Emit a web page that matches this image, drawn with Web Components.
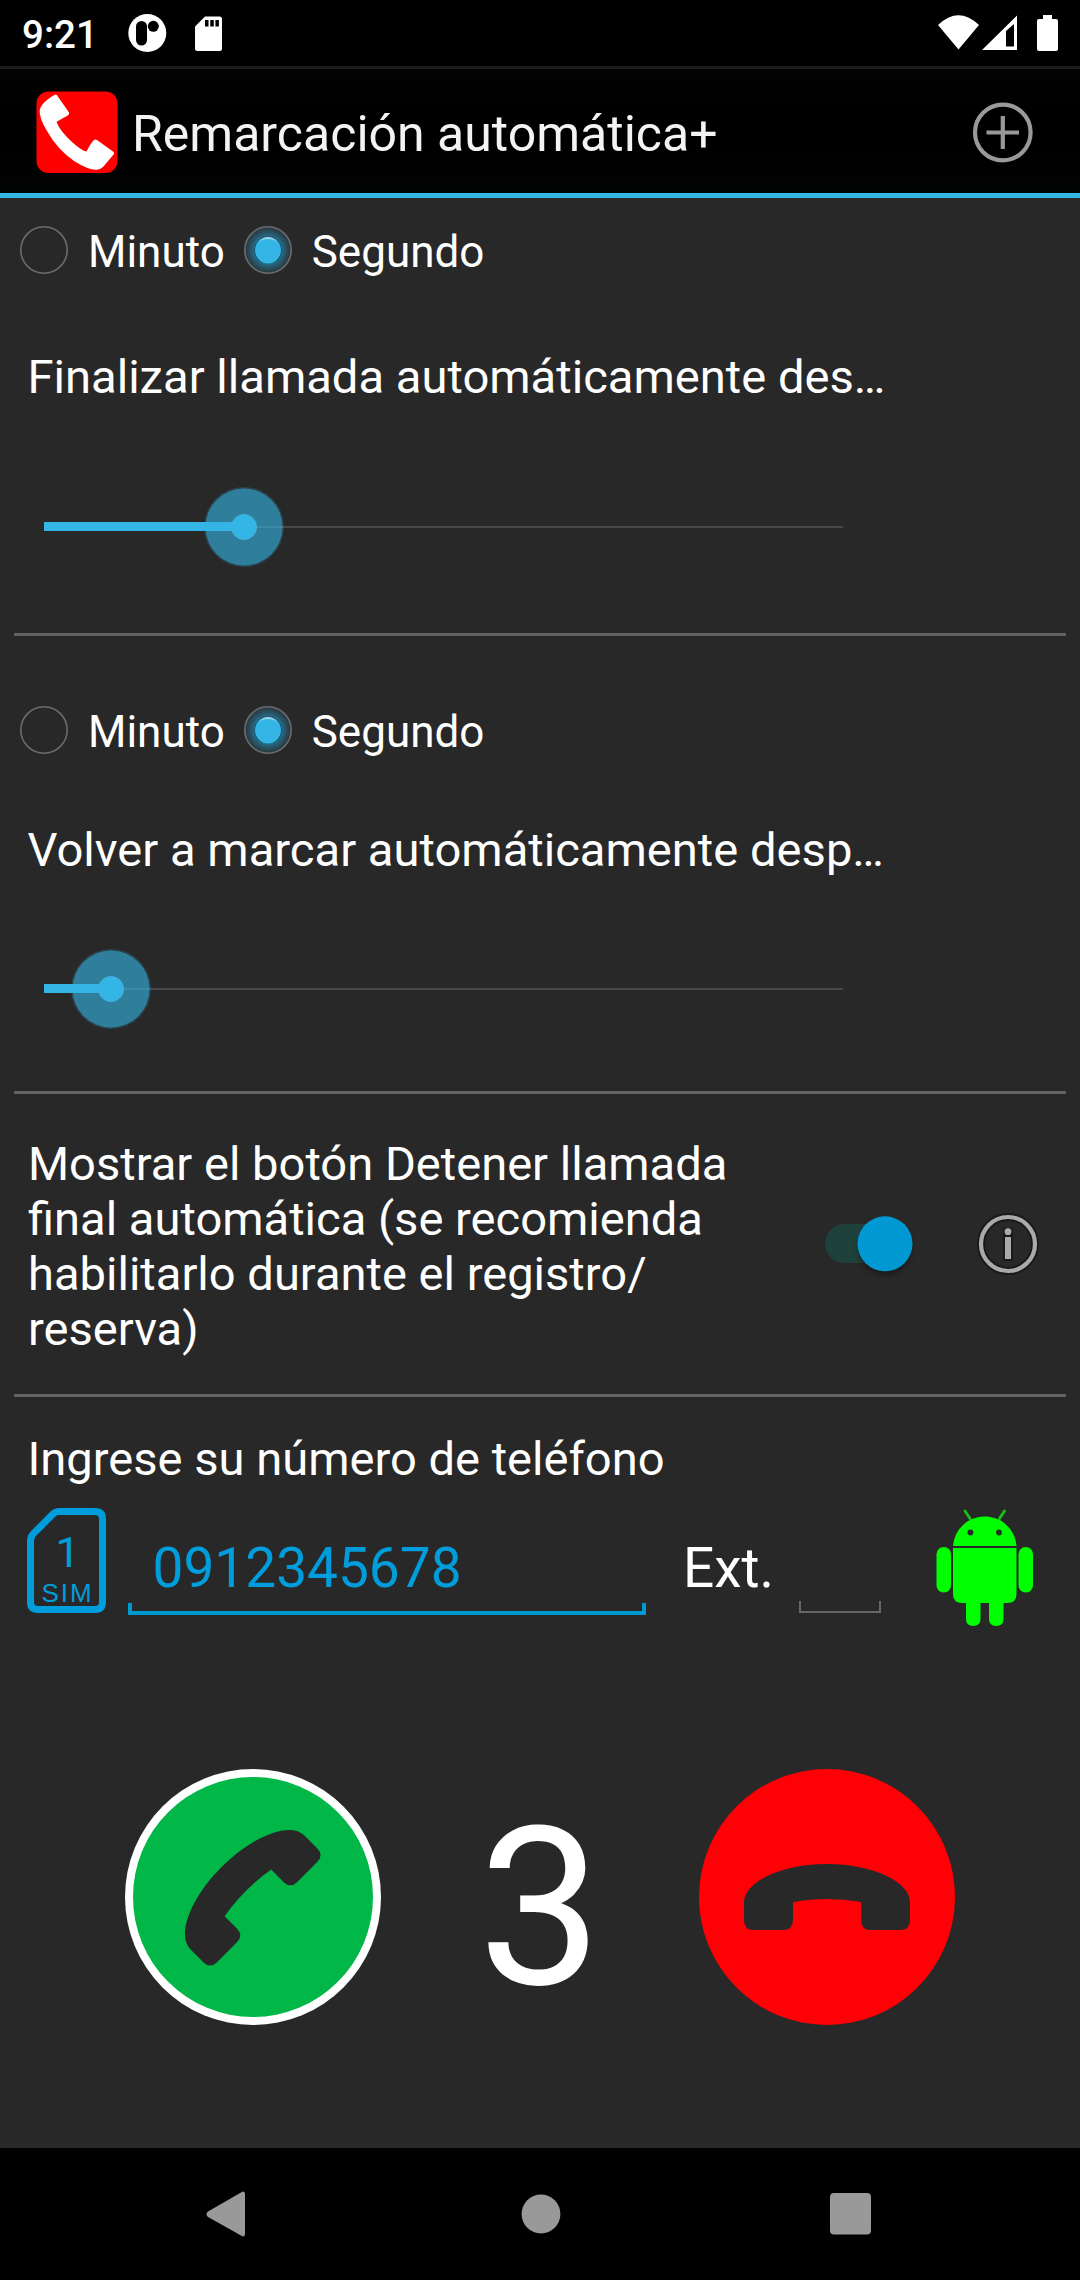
<!DOCTYPE html>
<html lang="es">
<head>
<meta charset="utf-8">
<title>Remarcación automática+</title>
<style>
html, body { margin: 0; background: #282828; }
body { width: 1080px; font-family: Roboto, "Noto Sans", sans-serif; color: #fff; }
</style>
</head>
<body>
<dialer-app></dialer-app>
<script>
const define = (name, html, setup) => {
  const tpl = document.createElement('template');
  tpl.innerHTML = html;
  customElements.define(name, class extends HTMLElement {
    constructor() {
      super();
      this.attachShadow({ mode: 'open' }).append(tpl.content.cloneNode(true));
    }
    connectedCallback() { if (setup) setup(this, this.shadowRoot); }
  });
};

define('status-bar', `
<style>
:host { display: flex; align-items: center; height: 66px; box-sizing: border-box; padding: 0 22px 0 22px; background: #000; border-bottom: 0; }
.time { font-size: 38.500px; font-weight: 500; line-height: 46px; width: 105px; margin-top: 3px; }
svg { display: block; }
.r { margin-left: auto; }
</style>
<span class="time">9:21</span>
<svg width="100" height="66" viewBox="127 0 100 66">
  <ellipse cx="147.3" cy="33" rx="19" ry="19" fill="#fff"/>
  <rect x="136" y="21" width="11" height="24.500" rx="5.500" fill="#000"/>
  <circle cx="153.300" cy="26.300" r="5.500" fill="#000"/>
  <path d="M205 16.500H219.500Q222 16.500 222 19V48.500Q222 51 219.500 51H197.500Q195 51 195 48.500V26.500Z" fill="#fff"/>
  <path d="M205 20h3.500v6.500H205zM210.300 20h3.500v6.500H210.300zM215.400 20h3.500v6.500H215.400z" fill="#000"/>
</svg>
<svg class="r" width="122" height="66" viewBox="936 0 122 66" fill="#fff">
  <path d="M938 25Q958.500 5.500 979 25L958.500 49.500Z"/>
  <path fill-rule="evenodd" d="M982 50L1017 15.500V50ZM1006 31V46.500H1014V24Z"/>
  <path d="M1043 15h9v4h4q2 0 2 2v28q0 2-2 2h-17q-2 0-2-2V21q0-2 2-2h4z"/>
</svg>`);

define('app-bar', `
<style>
:host { display: flex; align-items: center; box-sizing: border-box; height: 132px; padding: 2px 45px 0 36px; background: linear-gradient(#020302, #000 30%, #000 65%, #030404); border-top: 3px solid #1c1c1c; border-bottom: 5px solid #33b5e5; }
.title { flex: 1; font-size: 50px; line-height: 58px; color: #f3f3f3; margin: 3px 0 0 14px; white-space: nowrap; }
svg { display: block; }
</style>
<svg width="82" height="83" viewBox="36 91 82 83">
  <rect x="36.500" y="91.500" width="81" height="81.500" rx="12" fill="#f00"/>
  <path d="M56 94.500Q54.500 94.500 49 98.500Q41 104 39.700 110Q39 118 47 131Q57 149 74 161Q90 171 98 169.500Q102 169 106 163.500L114 154Q114.500 152.500 113 151.500L97 140Q95.500 139 94 140Q91 142.500 86.500 151.500Q82 151 72 142Q60 131 56.500 122Q59 120 66 116.500Q70 114.500 69 112.500L57.500 96Q56.500 94.500 56 94.500Z" fill="#fff"/>
</svg>
<span class="title"><slot></slot></span>
<svg width="64" height="64" viewBox="971 100 64 64" fill="none" stroke="#999" stroke-width="4.200">
  <circle cx="1002.800" cy="132.500" r="27.800"/><path d="M986.500 132.500H1019M1002.800 116V149"/>
</svg>`);

define('radio-option', `
<style>
:host { display: flex; align-items: center; font-size: 44px; line-height: 52px; }
svg { display: block; margin-right: 18px; }
span { padding-top: 3px; margin-bottom: -1px; }
</style>
<svg width="52" height="52" viewBox="-26 -26 52 52">
  <defs><radialGradient id="g"><stop offset=".5" stop-color="#247a9c"/><stop offset=".75" stop-color="#285365"/><stop offset="1" stop-color="#293338"/></radialGradient>
  <linearGradient id="h" x1="0" y1="0" x2="0" y2="1"><stop offset="0" stop-color="#b5e2f5"/><stop offset=".22" stop-color="#33b5e5"/></linearGradient></defs>
  <g class="on"><circle r="23.500" fill="url(#g)"/><circle r="13.700" fill="#174c62"/><circle r="13" fill="url(#h)"/><circle cy="1.200" r="12.300" fill="#33b5e5"/></g>
  <circle r="23.200" fill="none" stroke="#6b6b6b" stroke-width="1.600"/>
</svg>
<span><slot></slot></span>`, (el, root) => { if (!el.hasAttribute('checked')) root.querySelector('.on').remove(); });

define('seek-bar', `
<style>
:host { display: block; width: 900px; height: 100px; }
svg { display: block; }
</style>
<svg width="900" height="100" viewBox="0 -50 900 100">
  <rect x="44" y="-1" width="799" height="2" fill="#484848"/>
  <rect class="fill" x="44" y="-5" height="9" fill="#33b5e5"/>
  <g class="thumb"><circle r="40" fill="#33b5e5" opacity=".2"/><circle r="38.500" fill="#33b5e5" opacity=".52"/>
  <circle r="12.500" fill="#33b5e5" stroke="#46b4dd" stroke-width="1"/></g>
</svg>`, (el, root) => {
  const x = +el.getAttribute('value');
  root.querySelector('.fill').setAttribute('width', x - 44);
  root.querySelector('.thumb').setAttribute('transform', 'translate(' + x + ' 0)');
});

define('timer-setting', `
<style>
:host { display: block; }
.units { display: flex; gap: 17px; padding-left: 18px; height: 52px; align-items: center; }
.label { font-size: 47.150px; line-height: 55px; width: 859px; padding-left: 27.500px; white-space: nowrap; margin-top: var(--label-gap); }
seek-bar { margin-top: var(--seek-gap); }
</style>
<div class="units"><radio-option>Minuto</radio-option><radio-option checked>Segundo</radio-option></div>
<div class="label"><slot></slot></div>
<seek-bar></seek-bar>`, (el, root) => {
  const s = root.querySelector('seek-bar'), n = document.createElement('seek-bar');
  n.setAttribute('value', el.getAttribute('value'));
  s.replaceWith(n);
});

define('section-rule', `<style>:host { display: block; height: 3px; margin: 0 14px; background: #636363; }</style>`);

define('toggle-row', `
<style>
:host { display: flex; align-items: center; padding: 0 38px 0 28px; height: 220px; }
.text { font-size: 47.100px; line-height: 55px; width: 760px; padding-top: 1px; }
svg { display: block; margin: -2px 0 0 auto; }
</style>
<div class="text"><slot></slot></div>
<svg width="222" height="80" viewBox="820 1204 222 80">
  <defs><filter id="s" x="-30%" y="-30%" width="160%" height="170%"><feGaussianBlur stdDeviation="2.500"/></filter></defs>
  <rect x="825" y="1224" width="82" height="39" rx="19.500" fill="#1e423b"/>
  <circle cx="885" cy="1248" r="27" fill="#000" opacity=".35" filter="url(#s)"/>
  <circle cx="885" cy="1243.800" r="27.500" fill="#0099d4"/>
  <g stroke="#191919" stroke-width="8" fill="none"><circle cx="1008" cy="1244" r="27"/><path d="M1008 1236V1261M1008 1228V1236" stroke-width="10"/></g>
  <circle cx="1008" cy="1244" r="27" fill="none" stroke="#aaa" stroke-width="4.200"/>
  <circle cx="1008" cy="1231.700" r="3.400" fill="#aaa"/><rect x="1005" y="1237" width="6" height="22" fill="#aaa"/>
</svg>`);

define('sim-badge', `
<style>
:host { display: grid; width: 79px; height: 106px; color: #009ddc; font-family: "Liberation Sans", Arial, sans-serif; }
svg, .t { grid-area: 1 / 1; }
svg { display: block; }
.t { display: flex; flex-direction: column; align-items: center; }
.n { font: 43px/44px Roboto, sans-serif; margin: 22px 0 0 2px; }
.s { font-size: 26px; line-height: 28px; letter-spacing: 2px; margin: 5px 0 0 2px; }
</style>
<svg width="79" height="106" viewBox="0 0 79 106"><path d="M32 3.500H68Q75.500 3.500 75.500 11V94Q75.500 101.500 68 101.500H11Q3.500 101.500 3.500 94V33Q3.500 29 6 26L26 6Q28.500 3.500 32 3.500Z" fill="none" stroke="#009ddc" stroke-width="7"/></svg>
<div class="t"><span class="n">1</span><span class="s">SIM</span></div>`);

define('line-field', `
<style>
:host { display: flex; flex-direction: column; justify-content: flex-end; color: #009ddc; font-size: 55px; line-height: 64px; }
.v { padding-left: 24.500px; height: 64px; margin-bottom: 3px; }
.u { height: 12px; box-sizing: border-box; border: solid var(--line, #0099cf); border-width: 0 var(--w, 4px) var(--w, 4px); }
</style>
<div class="v"><slot></slot></div><div class="u"></div>`);

define('android-robot', `
<style>:host { display: block; } svg { display: block; }</style>
<svg width="100" height="120" viewBox="935 1508 100 120" fill="#0f0">
  <path d="M965 1511L970 1518.500M1004.500 1511L999.500 1518.500" stroke="#14c514" stroke-width="2.800" stroke-linecap="round"/>
  <path d="M953 1546Q954.500 1530 968 1521Q976 1516.500 984.700 1516.500Q993.500 1516.500 1001.500 1521Q1015 1530 1016.500 1546Z"/>
  <circle cx="970.400" cy="1532.500" r="2.900" fill="#282828"/><circle cx="999" cy="1532.500" r="2.900" fill="#282828"/>
  <path d="M953 1548H1016.500V1594Q1016.500 1603 1007.500 1603H962Q953 1603 953 1594Z"/>
  <rect x="936.500" y="1547" width="14.500" height="45.500" rx="7.200"/><rect x="1018.500" y="1547" width="14.500" height="45.500" rx="7.200"/>
  <path d="M966 1600H980.500V1619Q980.500 1626 973.200 1626Q966 1626 966 1619ZM989 1600H1003.500V1619Q1003.500 1626 996.200 1626Q989 1626 989 1619Z"/>
</svg>`);

define('phone-entry', `
<style>
:host { display: block; }
.label { font-size: 47.100px; line-height: 55px; padding-left: 27.500px; }
.row { display: flex; align-items: flex-start; padding-left: 27px; height: 120px; margin-top: 22px; }
.num { width: 518px; height: 107px; margin-left: 22px; }
.ext { font-size: 55px; line-height: 64px; margin: 28px 0 0 37px; width: 116px; }
.small { width: 82px; height: 105px; --line: #666; --w: 2px; }
android-robot { margin-left: 54px; }
</style>
<div class="label"><slot></slot></div>
<div class="row"><sim-badge></sim-badge><line-field class="num">0912345678</line-field><span class="ext">Ext.</span><line-field class="small"></line-field><android-robot></android-robot></div>`);

define('call-controls', `
<style>
:host { display: flex; align-items: center; justify-content: space-between; padding: 0 125px; height: 256px; }
svg { display: block; }
.n { font-size: 220px; line-height: 256px; margin-top: 24px; }
</style>
<svg width="256" height="256" viewBox="-128 -128 256 256">
  <circle r="128" fill="#fff"/><circle r="120" fill="#00b748"/>
  <g transform="translate(-1 0) rotate(-45) scale(.97)"><path transform="translate(0 6)" d="M-83 -13C-83 -33 -46 -50 0 -50S83 -33 83 -13V6Q83 16 73 16H44Q34 16 34 6V-12Q0 -18 -34 -12V6Q-34 16 -44 16H-73Q-83 16 -83 6Z" fill="#282828"/></g>
</svg>
<span class="n"><slot></slot></span>
<svg width="256" height="256" viewBox="-128 -128 256 256">
  <circle r="128" fill="#ff0006"/>
  <path d="M-83 5C-83 -15 -46 -33 0 -33S83 -15 83 5V23Q83 33 73 33H44Q34 33 34 23V5Q0 -1 -34 5V23Q-34 33 -44 33H-73Q-83 33 -83 23Z" fill="#282828"/>
</svg>`);

define('nav-bar', `
<style>:host { display: flex; justify-content: space-between; align-items: center; box-sizing: border-box; height: 132px; padding: 0 208px 0 205px; background: #000; } svg { display: block; }</style>
<svg width="42" height="46" viewBox="205 2191.500 42 46"><path d="M208 2212L241 2193Q245 2190.500 245 2195V2234Q245 2238.500 241 2236L208 2217.500Q205 2214.700 208 2212Z" fill="#999"/></svg>
<svg width="44" height="40" viewBox="-24 -20 44 40"><circle r="19.400" fill="#999"/></svg>
<svg width="42" height="42"><rect width="41" height="41.500" rx="4" fill="#999"/></svg>`);

define('dialer-app', `
<style>
:host { display: flex; flex-direction: column; width: 1080px; height: 2280px; background: #282828; overflow: hidden; }
.a { margin-top: 26px; height: 409px; --label-gap: 74px; --seek-gap: 72px; }
.b { margin-top: 68px; height: 387px; --label-gap: 67px; --seek-gap: 61px; }
toggle-row { margin-top: 41px; height: 220px; padding-bottom: 39px; }
phone-entry { margin-top: 34px; }
call-controls { margin-top: 141px; }
nav-bar { margin-top: auto; }
</style>
<status-bar></status-bar>
<app-bar>Remarcación automática+</app-bar>
<timer-setting class="a" value="244">Finalizar llamada automáticamente des…</timer-setting>
<section-rule></section-rule>
<timer-setting class="b" value="111">Volver a marcar automáticamente desp…</timer-setting>
<section-rule></section-rule>
<toggle-row>Mostrar el botón Detener llamada final automática (se recomienda habilitarlo durante el registro/<br>reserva)</toggle-row>
<section-rule></section-rule>
<phone-entry>Ingrese su número de teléfono</phone-entry>
<call-controls>3</call-controls>
<nav-bar></nav-bar>`);
</script>
</body>
</html>
